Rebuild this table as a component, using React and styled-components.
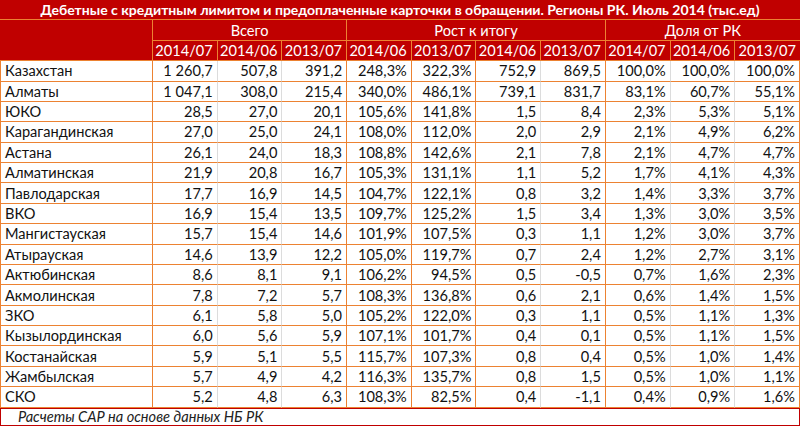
import React from 'react'
import styled, { createGlobalStyle } from 'styled-components'

const GlobalStyle = createGlobalStyle`
  html, body {
    margin: 0;
    padding: 0;
    background: #ffffff;
  }
`

const RED = '#c00000'
const ORANGE = '#ec8232'
const GRAY = '#dcdcdc'

// right border kind for each of the 10 number columns
const colLines = ['gray', 'gray', 'orange', 'orange', 'orange', 'gray', 'orange', 'gray', 'gray', 'edge']

const rows = [
  ['Казахстан', '1 260,7', '507,8', '391,2', '248,3%', '322,3%', '752,9', '869,5', '100,0%', '100,0%', '100,0%'],
  ['Алматы', '1 047,1', '308,0', '215,4', '340,0%', '486,1%', '739,1', '831,7', '83,1%', '60,7%', '55,1%'],
  ['ЮКО', '28,5', '27,0', '20,1', '105,6%', '141,8%', '1,5', '8,4', '2,3%', '5,3%', '5,1%'],
  ['Карагандинская', '27,0', '25,0', '24,1', '108,0%', '112,0%', '2,0', '2,9', '2,1%', '4,9%', '6,2%'],
  ['Астана', '26,1', '24,0', '18,3', '108,8%', '142,6%', '2,1', '7,8', '2,1%', '4,7%', '4,7%'],
  ['Алматинская', '21,9', '20,8', '16,7', '105,3%', '131,1%', '1,1', '5,2', '1,7%', '4,1%', '4,3%'],
  ['Павлодарская', '17,7', '16,9', '14,5', '104,7%', '122,1%', '0,8', '3,2', '1,4%', '3,3%', '3,7%'],
  ['ВКО', '16,9', '15,4', '13,5', '109,7%', '125,2%', '1,5', '3,4', '1,3%', '3,0%', '3,5%'],
  ['Мангистауская', '15,7', '15,4', '14,6', '101,9%', '107,5%', '0,3', '1,1', '1,2%', '3,0%', '3,7%'],
  ['Атырауская', '14,6', '13,9', '12,2', '105,0%', '119,7%', '0,7', '2,4', '1,2%', '2,7%', '3,1%'],
  ['Актюбинская', '8,6', '8,1', '9,1', '106,2%', '94,5%', '0,5', '-0,5', '0,7%', '1,6%', '2,3%'],
  ['Акмолинская', '7,8', '7,2', '5,7', '108,3%', '136,8%', '0,6', '2,1', '0,6%', '1,4%', '1,5%'],
  ['ЗКО', '6,1', '5,8', '5,0', '105,2%', '122,0%', '0,3', '1,1', '0,5%', '1,1%', '1,3%'],
  ['Кызылординская', '6,0', '5,6', '5,9', '107,1%', '101,7%', '0,4', '0,1', '0,5%', '1,1%', '1,5%'],
  ['Костанайская', '5,9', '5,1', '5,5', '115,7%', '107,3%', '0,8', '0,4', '0,5%', '1,0%', '1,4%'],
  ['Жамбылская', '5,7', '4,9', '4,2', '116,3%', '135,7%', '0,8', '1,5', '0,5%', '1,0%', '1,1%'],
  ['СКО', '5,2', '4,8', '6,3', '108,3%', '82,5%', '0,4', '-1,1', '0,4%', '0,9%', '1,6%'],
]

const years = ['2014/07', '2014/06', '2013/07', '2014/06', '2013/07', '2014/06', '2013/07', '2014/07', '2014/06', '2013/07']

const App = () => (
  <>
    <GlobalStyle />
    <Sheet>
      <Title>Дебетные с кредитным лимитом и предоплаченные карточки в обращении. Регионы РК. Июль 2014 (тыс.ед)</Title>
      <Corner />
      <Group $span={3}>Всего</Group>
      <Group $span={4}>Рост к итогу</Group>
      <Group $span={3} $last>Доля от РК</Group>
      {years.map((y, i) => (
        <Year key={i} $last={i === years.length - 1}>{y}</Year>
      ))}
      {rows.map(([name, ...vals]) => (
        <React.Fragment key={name}>
          <Name>{name}</Name>
          {vals.map((v, i) => (
            <Num key={i} $line={colLines[i]}>{v}</Num>
          ))}
        </React.Fragment>
      ))}
      <Footer>Расчеты САР на основе данных НБ РК</Footer>
    </Sheet>
  </>
)

export default App

const Sheet = styled.div`
  display: grid;
  grid-template-columns: 153px repeat(10, 1fr);
  grid-template-rows: repeat(21, 1fr);
  width: 800px;
  height: 428px;
  font-family: Lato, "Open Sans", sans-serif;
  font-size: 14.6px;
  color: #111;
  background: #fff;

  & > * {
    box-sizing: border-box;
    min-width: 0;
    white-space: nowrap;
    overflow: hidden;
  }
`

const Title = styled.div`
  grid-column: 1 / -1;
  display: flex;
  align-items: center;
  justify-content: center;
  background: ${RED};
  border-bottom: 1px solid ${ORANGE};
  color: #fff;
  font-weight: bold;
  font-size: 14px;
`

const Corner = styled.div`
  grid-row: span 2;
  background: ${RED};
  border-right: 1px solid ${ORANGE};
  border-bottom: 1px solid ${ORANGE};
`

const Group = styled.div`
  grid-column: span ${p => p.$span};
  display: flex;
  align-items: center;
  justify-content: center;
  background: ${RED};
  color: #fff;
  border-bottom: 1px solid ${ORANGE};
  border-right: ${p => (p.$last ? 'none' : `1px solid ${ORANGE}`)};
`

const Year = styled.div`
  display: flex;
  align-items: center;
  justify-content: flex-end;
  padding-right: 4px;
  background: ${RED};
  color: #fff;
  border-bottom: 1px solid ${ORANGE};
  border-right: ${p => (p.$last ? 'none' : `1px solid ${ORANGE}`)};
`

const Name = styled.div`
  display: flex;
  align-items: center;
  padding-left: 4px;
  border-left: 1px solid ${ORANGE};
  border-right: 1px solid ${ORANGE};
  border-bottom: 1px solid ${ORANGE};
`

const Num = styled.div`
  display: flex;
  align-items: center;
  justify-content: flex-end;
  padding-right: 4px;
  border-bottom: 1px solid ${ORANGE};
  border-right: 1px solid
    ${p => (p.$line === 'gray' ? GRAY : ORANGE)};
`

const Footer = styled.div`
  grid-column: 1 / -1;
  display: flex;
  align-items: center;
  padding-left: 17px;
  margin-bottom: 2px;
  border: 1px solid ${RED};
  font-style: italic;
  color: #222;
`
